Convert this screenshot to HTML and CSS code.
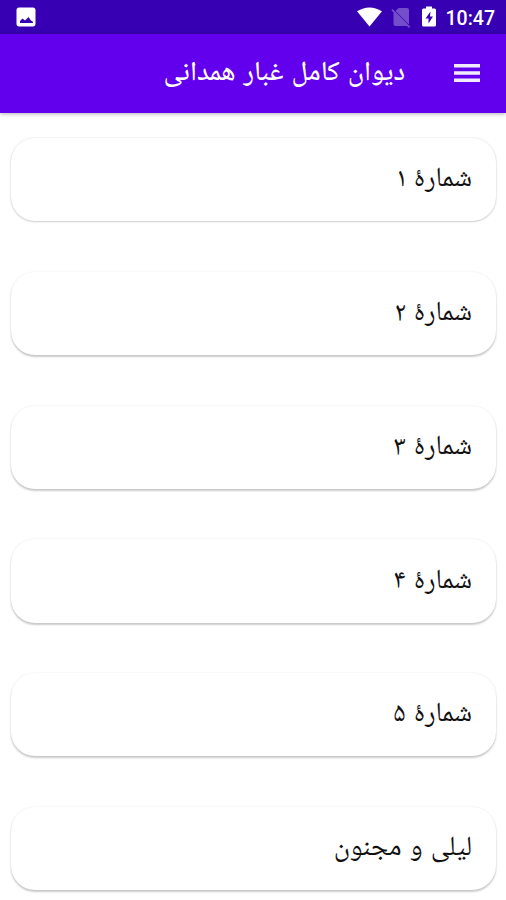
FILE: index.html
```html
<!DOCTYPE html>
<html lang="fa" dir="rtl">
<head>
<meta charset="utf-8">
<title>دیوان کامل غبار همدانی</title>
<link rel="stylesheet" href="styles.css">
</head>
<body>
<div class="status" dir="ltr">
  <svg class="photo" viewBox="0 0 24 24"><path fill="currentColor" d="M21.500 19V5c0-1.400-1.100-2.500-2.500-2.500H5C3.600 2.500 2.500 3.600 2.500 5v14c0 1.400 1.100 2.500 2.500 2.500h14c1.400 0 2.500-1.100 2.500-2.500zM6 18v-2l2.500-2.500 2.500 2L14.500 12l2 3 2.500 2v1z"/></svg>
  <div class="tray">
    <svg class="wifi" viewBox="0 0 26 20"><path fill="currentColor" d="M13 20 0 4Q13-4 26 4Z"/></svg>
    <svg class="sim" viewBox="0 0 24 24"><path fill="currentColor" d="M20 5c0-1.100-.89-2-2-2H9.500L6.500 6 20 19.500zM3.650 3.880 2.380 5.150 4.500 7.500V19c0 1.100.9 2 2 2h11.500l2 2 1.270-1.270z"/></svg>
    <svg class="battery" viewBox="0 0 14 20"><path fill="currentColor" fill-rule="evenodd" d="M4 0h6v2h2.500Q14 2 14 3.500v15q0 1.500-1.500 1.500h-11Q0 20 0 18.500v-15Q0 2 1.500 2H4ZM8.500 5 3.500 12h3v5l4.500-7H8Z"/></svg>
    <span class="time">10:47</span>
  </div>
</div>
<header class="bar">
  <svg class="menu" viewBox="0 0 26 18"><path fill="currentColor" d="M0 0h26v3.500H0zM0 7.250h26v3.500H0zM0 14.500h26V18H0z"/></svg>
  <h1>دیوان کامل غبار همدانی</h1>
</header>
<main class="list">
  <div class="card">شمارهٔ ۱</div>
  <div class="card">شمارهٔ ۲</div>
  <div class="card">شمارهٔ ۳</div>
  <div class="card">شمارهٔ ۴</div>
  <div class="card">شمارهٔ ۵</div>
  <div class="card">لیلی و مجنون</div>
</main>
</body>
</html>
```
FILE: styles.css
```css
*{box-sizing:border-box}
body{margin:0;height:900px;overflow:hidden;background:#fff;color:#111;font-family:"Noto Naskh Arabic UI","Noto Naskh Arabic","Liberation Sans",sans-serif;word-spacing:2px}
.status{height:34px;background:#3700b3;color:#fff;display:flex;align-items:center;justify-content:space-between;padding:0 11px 0 14px}
.photo{width:24px;height:24px}
.tray{display:flex;align-items:center}
.wifi{width:25px;height:20px;margin-right:7px}
.sim{width:24px;height:24px;margin-right:9px;opacity:.3}
.battery{width:14px;height:21px;margin:-1px 10px 0 0}
.time{font:500 19.500px/35px Roboto,sans-serif;padding-top:2px}
.bar{height:78.500px;background:#6200ee;color:#fff;display:flex;align-items:center;padding:0 26px;box-shadow:0 1px 4px rgba(0,0,0,.3)}
.menu{width:26px;height:18px;margin-left:49px;opacity:.92}
h1{margin:0;font-size:27.500px;font-weight:500;line-height:40px;padding-top:1px}
.list{padding:25.500px 10px 0 11px;display:flex;flex-direction:column;gap:50.500px}
.card{height:83.300px;flex:none;border-radius:24px;background:#fff;padding:0 24px;display:flex;align-items:center;font-size:27.500px;box-shadow:0 2px 2px rgba(0,0,0,.2),0 0 2px rgba(0,0,0,.1)}
.card:first-child{box-shadow:0 1px 2px rgba(0,0,0,.16),0 0 2px rgba(0,0,0,.14)}
```
